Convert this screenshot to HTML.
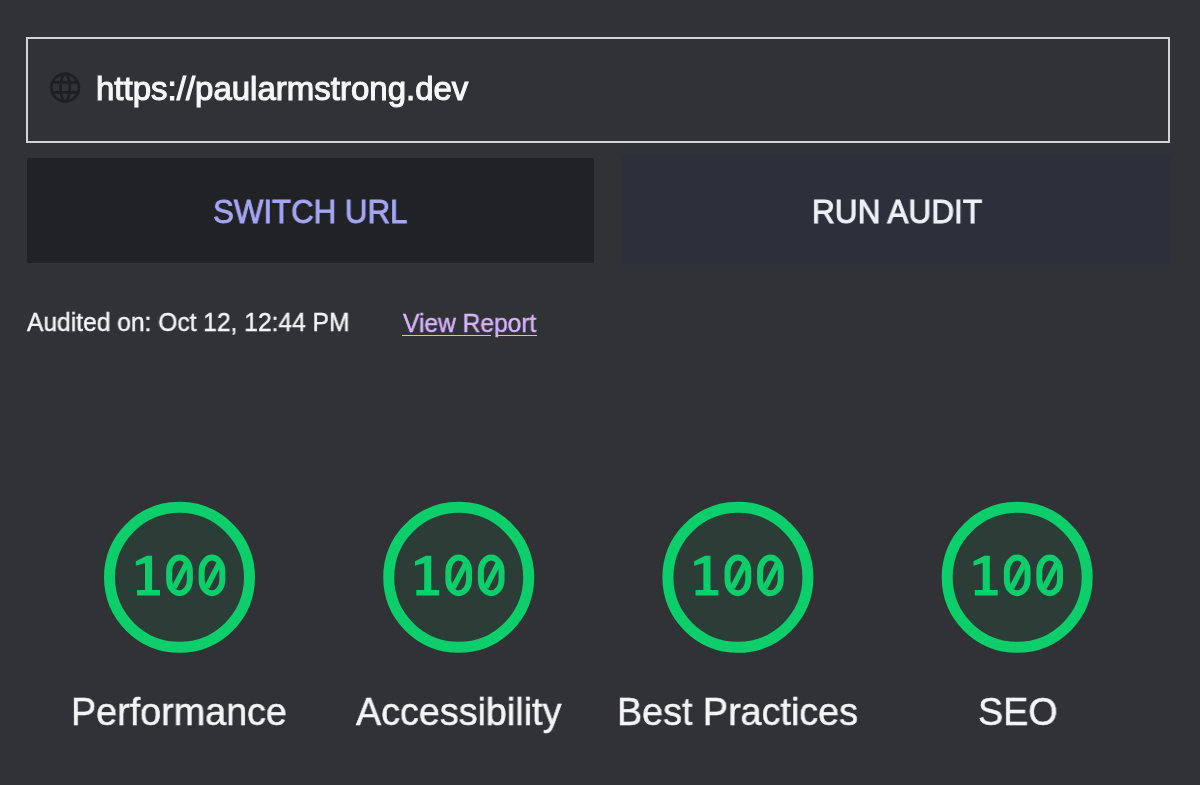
<!DOCTYPE html>
<html>
<head>
<meta charset="utf-8">
<style>
html,body{margin:0;padding:0;}
body{width:1200px;height:785px;overflow:hidden;background:#313236;position:relative;font-family:"Liberation Sans",sans-serif;}
.abs{position:absolute;}
.t{position:absolute;white-space:nowrap;line-height:1;transform-origin:0 0;will-change:transform;}
#box{left:26px;top:37px;width:1140px;height:102px;border:2px solid #d2d3d8;}
#url{left:96px;top:72px;font-size:33px;color:#f7f7f9;-webkit-text-stroke:1.1px #f7f7f9;}
#b1{left:27px;top:158px;width:567px;height:105px;background:#212226;border-radius:2px;}
#b2{left:621px;top:155px;width:550px;height:109px;background:#2b303b;}
#sw{left:213.3px;top:195px;transform:scaleX(0.947);font-size:33px;color:#a5a6f6;-webkit-text-stroke:0.9px #a5a6f6;}
#run{left:811.9px;top:195px;transform:scaleX(0.9565);font-size:33px;color:#eef0f8;-webkit-text-stroke:1px #eef0f8;}
#aud{left:26.7px;top:310px;transform:scaleX(0.983);font-size:25px;color:#f5f5f7;-webkit-text-stroke:0.4px #f5f5f7;}
#vr{left:402.8px;top:310.5px;transform:scaleX(0.982);font-size:25px;color:#d8b4fe;-webkit-text-stroke:0.4px #d8b4fe;}
#ul{left:402px;top:334.7px;width:89px;height:1.5px;background:#d8b4fe;}
#ul2{left:496px;top:334.7px;width:41px;height:1.5px;background:#d8b4fe;}
.lab{top:692px;transform:scaleX(0.967);font-size:39px;color:#f5f5f7;-webkit-text-stroke:0.5px #f5f5f7;}
</style>
</head>
<body>
<div id="box" class="abs"></div>
<svg class="abs" style="left:0;top:0" width="1200" height="785" viewBox="0 0 1200 785">
  <defs>
    <g id="digits" fill="#0cce6b">
      <path d="M-43.7 -16.05 L-43.7 -11.5 L-34.5 -14.4 L-34.5 12.7 L-42.4 12.7 L-42.4 18.1 L-19.5 18.1 L-19.5 12.7 L-27.4 12.7 L-27.4 -21.5 L-32.8 -21.5 Z"/>
      <rect x="-10.35" y="-19.7" width="20.7" height="35.65" rx="10.35" ry="13.5" fill="none" stroke="#0cce6b" stroke-width="6"/>
      <path d="M8.00 -15.6 L-5.30 10.2" stroke="#0cce6b" stroke-width="5.5" fill="none"/>
      <rect x="22.15" y="-19.7" width="20.7" height="35.65" rx="10.35" ry="13.5" fill="none" stroke="#0cce6b" stroke-width="6"/>
      <path d="M40.50 -15.6 L27.20 10.2" stroke="#0cce6b" stroke-width="5.5" fill="none"/>
    </g>
    <g id="gauge">
      <circle cx="0" cy="0" r="70" fill="#2c3d38" stroke="#0cce6b" stroke-width="11"/>
      <use href="#digits"/>
    </g>
  </defs>
  <use href="#gauge" x="179.5" y="577.3"/>
  <use href="#gauge" x="458.7" y="577.3"/>
  <use href="#gauge" x="737.9" y="577.3"/>
  <use href="#gauge" x="1017.2" y="577.3"/>
  <!-- globe -->
  <g transform="translate(65.15 87.65)" fill="none" stroke="#1e1f22" stroke-width="2.6">
    <circle r="13.8"/>
    <ellipse rx="4.6" ry="13.8"/>
    <path d="M-12.6 -5.3 H12.6 M-12.8 4.7 H12.8"/>
  </g>
</svg>
<div id="url" class="t">https://paularmstrong.dev</div>
<div id="b1" class="abs"></div>
<div id="b2" class="abs"></div>
<div id="sw" class="t">SWITCH URL</div>
<div id="run" class="t">RUN AUDIT</div>
<div id="aud" class="t">Audited on: Oct 12, 12:44 PM</div>
<div id="vr" class="t">View Report</div>
<div id="ul" class="abs"></div>
<div id="ul2" class="abs"></div>
<div class="t lab" style="left:71.1px">Performance</div>
<div class="t lab" style="left:355.5px">Accessibility</div>
<div class="t lab" style="left:617.1px">Best Practices</div>
<div class="t lab" style="left:977.5px">SEO</div>
</body>
</html>
